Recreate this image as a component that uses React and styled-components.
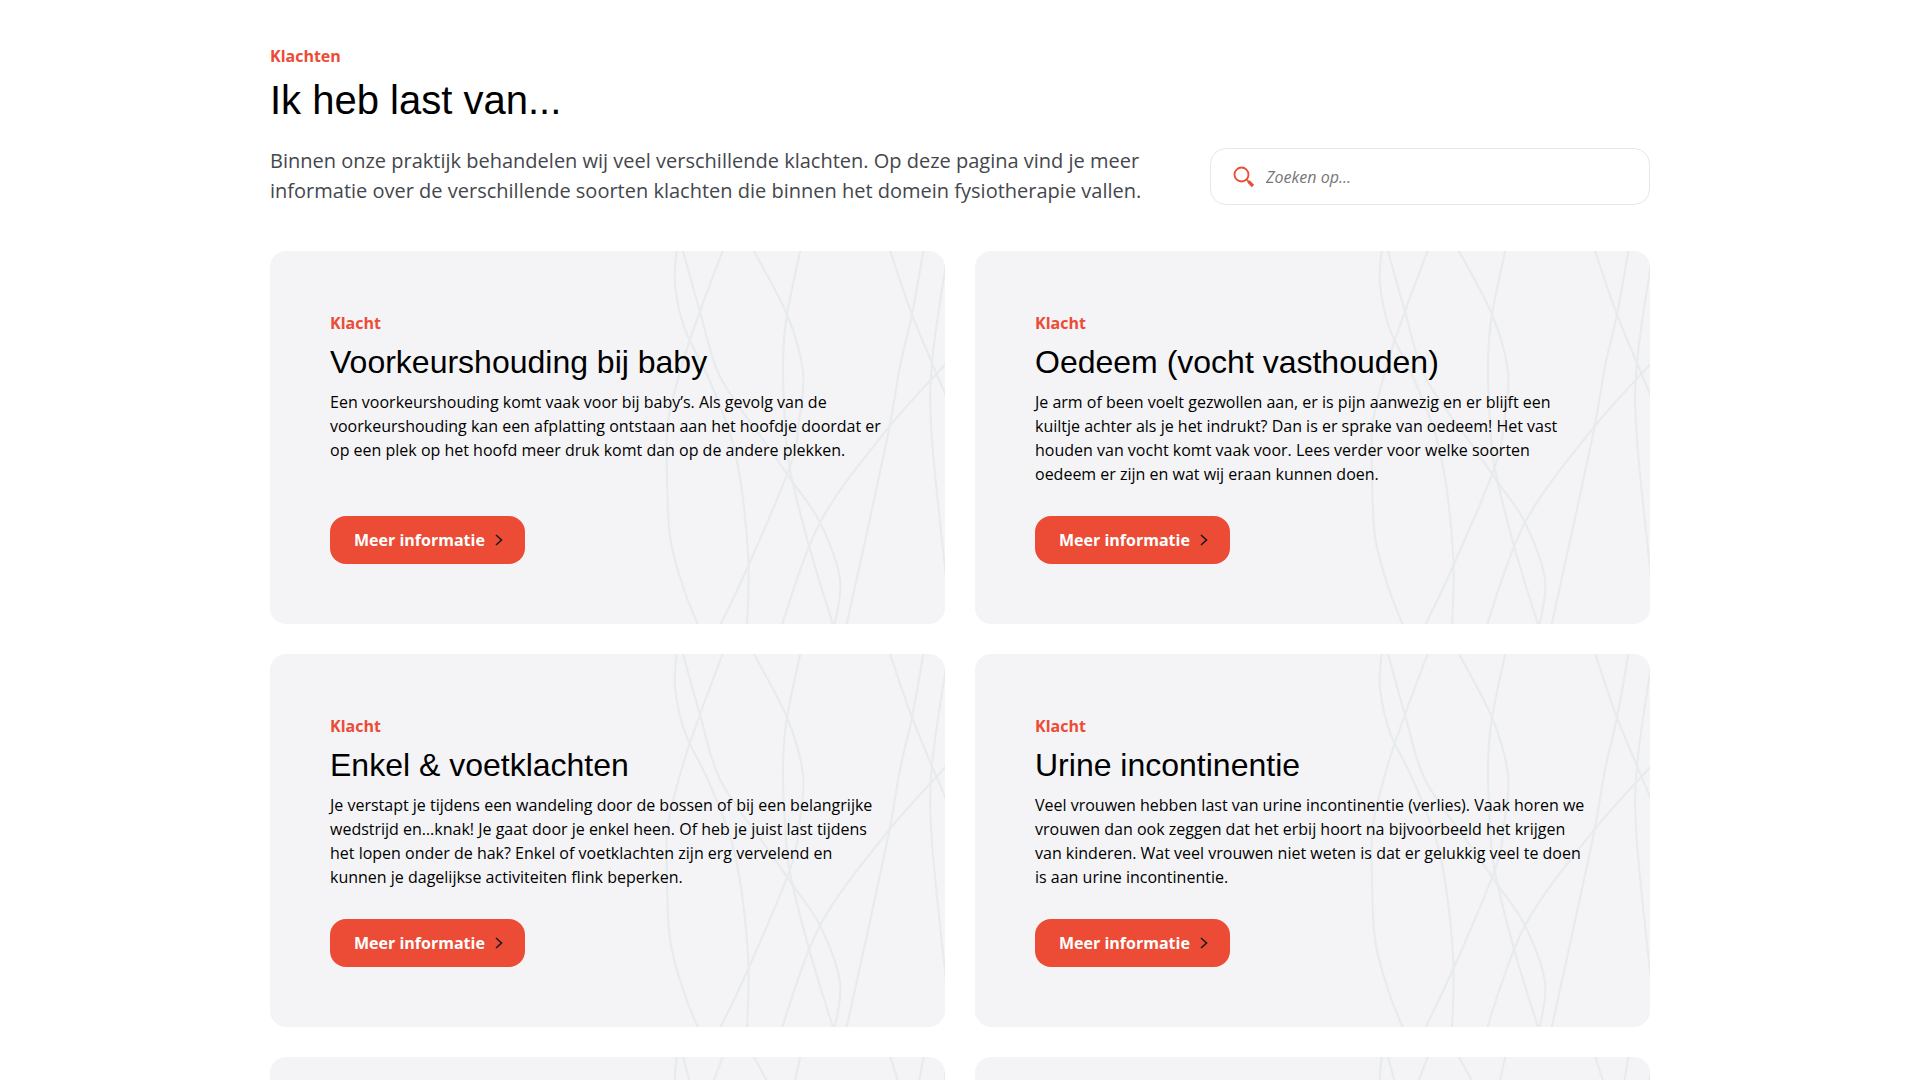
import React from 'react';
import styled, { createGlobalStyle } from 'styled-components';

const GlobalStyle = createGlobalStyle`
    html, body {
        margin: 0;
        padding: 0;
        background: #fff;
        overflow: hidden;
        height: 100%;
    }
    * {
        box-sizing: border-box;
    }
`;

const complaints = [
    {
        title: 'Voorkeurshouding bij baby',
        text: 'Een voorkeurshouding komt vaak voor bij baby’s. Als gevolg van de voorkeurshouding kan een afplatting ontstaan aan het hoofdje doordat er op een plek op het hoofd meer druk komt dan op de andere plekken.',
    },
    {
        title: 'Oedeem (vocht vasthouden)',
        text: 'Je arm of been voelt gezwollen aan, er is pijn aanwezig en er blijft een kuiltje achter als je het indrukt? Dan is er sprake van oedeem! Het vast houden van vocht komt vaak voor. Lees verder voor welke soorten oedeem er zijn en wat wij eraan kunnen doen.',
    },
    {
        title: 'Enkel & voetklachten',
        text: 'Je verstapt je tijdens een wandeling door de bossen of bij een belangrijke wedstrijd en…knak! Je gaat door je enkel heen. Of heb je juist last tijdens het lopen onder de hak? Enkel of voetklachten zijn erg vervelend en kunnen je dagelijkse activiteiten flink beperken.',
    },
    {
        title: 'Urine incontinentie',
        text: 'Veel vrouwen hebben last van urine incontinentie (verlies). Vaak horen we vrouwen dan ook zeggen dat het erbij hoort na bijvoorbeeld het krijgen van kinderen. Wat veel vrouwen niet weten is dat er gelukkig veel te doen is aan urine incontinentie.',
    },
];

// hand traced lines of the card background, x/y in px from the top left of the svg
const waveLines = [
    [[17, -4], [15, 33], [25, 78], [50, 130], [75, 200], [88, 300], [87, 376]],
    [[22, -4], [40, 60], [60, 125], [103, 188], [133, 231], [160, 271], [180, 328], [174, 376]],
    [[64, -4], [40, 60], [23, 110], [8, 170], [7, 221], [10, 285], [23, 335], [39, 376]],
    [[92, -4], [127, 63], [143, 120], [139, 170], [130, 215], [88, 315], [59, 376]],
    [[141, -4], [127, 63], [123, 110], [125, 170], [130, 218], [150, 298], [174, 376]],
    [[229, -4], [252, 63], [287, 147]],
    [[264, -4], [252, 63], [240, 115], [227, 188], [186, 376]],
    [[287, 111], [227, 178], [160, 271], [121, 376]],
    [[287, 6], [272, 111], [272, 188], [287, 335]],
];

const toPath = (pts) => {
    let d = `M${pts[0][0]} ${pts[0][1]}`;
    for (let i = 0; i < pts.length - 1; i++) {
        const p0 = pts[i - 1] || pts[i];
        const p1 = pts[i];
        const p2 = pts[i + 1];
        const p3 = pts[i + 2] || p2;
        const c1x = p1[0] + (p2[0] - p0[0]) / 6;
        const c1y = p1[1] + (p2[1] - p0[1]) / 6;
        const c2x = p2[0] - (p3[0] - p1[0]) / 6;
        const c2y = p2[1] - (p3[1] - p1[1]) / 6;
        d += ` C${c1x} ${c1y} ${c2x} ${c2y} ${p2[0]} ${p2[1]}`;
    }
    return d;
};

function Waves() {
    return (
        <WaveSvg viewBox="0 0 285 372" aria-hidden="true">
            {waveLines.map((pts, i) => (
                <path key={i} d={toPath(pts)} />
            ))}
        </WaveSvg>
    );
}

function SearchIcon() {
    return (
        <svg width="22" height="22" viewBox="0 0 22 22" fill="none" stroke="#ec4c36">
            <circle cx="8.5" cy="8.5" r="7" strokeWidth="1.8" />
            <path d="M13.6 13.6 L15.6 15.6" strokeWidth="1.6" />
            <path d="M15.4 15.4 L20 20" strokeWidth="3.2" />
        </svg>
    );
}

function Chevron() {
    return (
        <svg width="8" height="12" viewBox="0 0 8 12" fill="none" stroke="#1a1a1a" strokeWidth="1.6">
            <path d="M1 1 L6.5 6 L1 11" />
        </svg>
    );
}

function ComplaintCard({ title, text }) {
    return (
        <Card>
            <Waves />
            {title && (
                <>
                    <Eyebrow>Klacht</Eyebrow>
                    <CardTitle>{title}</CardTitle>
                    <CardText>{text}</CardText>
                    <MoreButton href="#">
                        Meer informatie
                        <Chevron />
                    </MoreButton>
                </>
            )}
        </Card>
    );
}

export default function App() {
    return (
        <Page>
            <GlobalStyle />
            <Eyebrow>Klachten</Eyebrow>
            <PageTitle>Ik heb last van...</PageTitle>
            <IntroRow>
                <Intro>
                    Binnen onze praktijk behandelen wij veel verschillende klachten. Op deze pagina vind je meer
                    informatie over de verschillende soorten klachten die binnen het domein fysiotherapie vallen.
                </Intro>
                <SearchBox>
                    <SearchIcon />
                    <SearchInput placeholder="Zoeken op..." />
                </SearchBox>
            </IntroRow>
            <CardGrid>
                {complaints.map((c) => (
                    <ComplaintCard key={c.title} title={c.title} text={c.text} />
                ))}
                <ComplaintCard />
                <ComplaintCard />
            </CardGrid>
        </Page>
    );
}

const Page = styled.main`
    width: 1380px;
    margin: 0 auto;
    padding-top: 44px;
    font-family: "Open Sans", sans-serif;
`;

const Eyebrow = styled.div`
    position: relative;
    font-size: 16px;
    line-height: 24px;
    font-weight: 700;
    color: #ec4c36;
`;

const PageTitle = styled.h1`
    margin: 8px 0 22px;
    font-family: "Liberation Sans", Arial, sans-serif;
    font-size: 40px;
    line-height: 48px;
    font-weight: 400;
    color: #000;
`;

const IntroRow = styled.div`
    display: flex;
    justify-content: space-between;
    align-items: flex-start;
    margin-bottom: 45px;
`;

const Intro = styled.p`
    margin: 0;
    width: 900px;
    font-size: 20px;
    line-height: 30px;
    color: #44474d;
`;

const SearchBox = styled.label`
    display: flex;
    align-items: center;
    gap: 9px;
    width: 440px;
    height: 57px;
    margin-top: 2px;
    padding: 0 22px;
    background: #fff;
    border: 1px solid #e5e7eb;
    border-radius: 16px;
`;

const SearchInput = styled.input`
    flex: 1;
    border: 0;
    outline: 0;
    background: transparent;
    font-family: "Open Sans", sans-serif;
    font-size: 16px;
    font-style: italic;

    &::placeholder {
        color: #767676;
        opacity: 1;
    }
`;

const CardGrid = styled.div`
    display: grid;
    grid-template-columns: 1fr 1fr;
    gap: 30px;
`;

const Card = styled.article`
    position: relative;
    display: flex;
    flex-direction: column;
    align-items: flex-start;
    min-height: 373px;
    padding: 60px;
    background: #f4f4f6;
    border-radius: 16px;
    overflow: hidden;
`;

const WaveSvg = styled.svg`
    position: absolute;
    top: 0;
    right: 0;
    width: 285px;
    height: 373px;
    fill: none;
    stroke: #e8ebed;
    stroke-width: 2.2;
`;

const CardTitle = styled.h2`
    position: relative;
    margin: 8px 0;
    font-family: "Liberation Sans", Arial, sans-serif;
    font-size: 32px;
    line-height: 39px;
    font-weight: 400;
    color: #000;
`;

const CardText = styled.p`
    position: relative;
    margin: 0 0 30px;
    font-size: 16px;
    line-height: 24px;
    color: #000;
`;

const MoreButton = styled.a`
    position: relative;
    display: inline-flex;
    align-items: center;
    gap: 10px;
    height: 48px;
    margin-top: auto;
    padding: 0 22px 0 24px;
    background: #ec4c36;
    border-radius: 16px;
    font-size: 16px;
    font-weight: 700;
    color: #fff;
    text-decoration: none;
`;
